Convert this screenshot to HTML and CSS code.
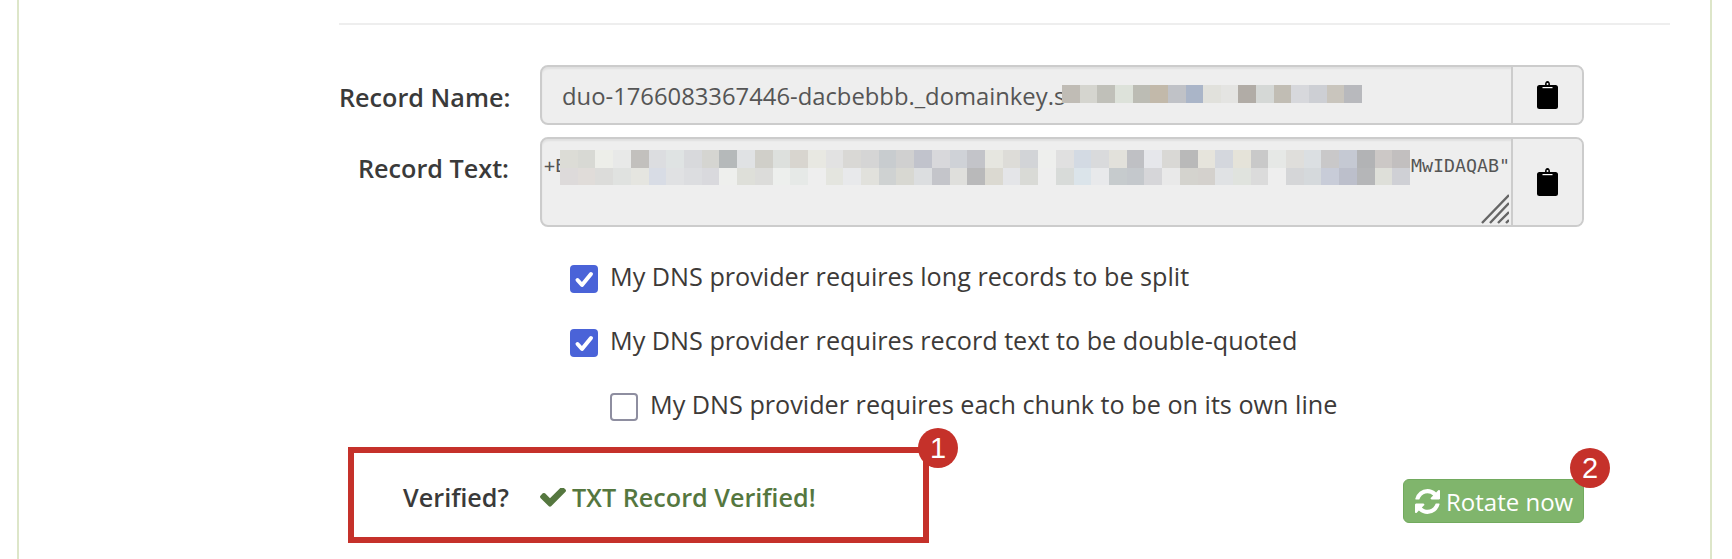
FILE: index.html
```html
<!DOCTYPE html>
<html lang="en">

<head>
    <meta charset="UTF-8" />
    <title>DKIM record</title>
    <link rel="stylesheet" href="styles.css">
</head>

<body>
    <div class="panel">
        <div class="content">
            <div class="divider"></div>

            <div class="form-row row-name">
                <div class="form-label">Record Name:</div>
                <div class="field field-name">
                    <div class="field-text">duo-1766083367446-dacbebbb._domainkey.s</div>
                    <!-- pixelated part of the record name -->
                    <svg class="mosaic mosaic-name" viewBox="0 0 17 1" preserveAspectRatio="none" shape-rendering="crispEdges">
                        <rect x="0" width="1" height="1" fill="#c0bcb5"/><rect x="1" width="1" height="1" fill="#d5d5cf"/><rect x="2" width="1" height="1" fill="#c0c0b9"/><rect x="3" width="1" height="1" fill="#dde2da"/><rect x="4" width="1" height="1" fill="#bcbcb4"/><rect x="5" width="1" height="1" fill="#c2b9aa"/><rect x="6" width="1" height="1" fill="#c0c2c7"/><rect x="7" width="1" height="1" fill="#aab5c8"/><rect x="8" width="1" height="1" fill="#e1e1dc"/><rect x="9" width="1" height="1" fill="#e4e4e2"/><rect x="10" width="1" height="1" fill="#b1aca6"/><rect x="11" width="1" height="1" fill="#d5d8d6"/><rect x="12" width="1" height="1" fill="#c1bdb4"/><rect x="13" width="1" height="1" fill="#d7d8dc"/><rect x="14" width="1" height="1" fill="#cdcfd4"/><rect x="15" width="1" height="1" fill="#c9c5bd"/><rect x="16" width="1" height="1" fill="#b8b9bd"/>
                    </svg>
                    <div class="copy-btn">
                        <svg class="clip-icon" viewBox="0 0 21 28"><path d="M8 4C8 1.5 9 0 10.500 0S13 1.500 13 4H18.500A2.500 2.500 0 0 1 21 6.500V25.500A2.500 2.500 0 0 1 18.500 28H2.500A2.500 2.500 0 0 1 0 25.500V6.500A2.500 2.500 0 0 1 2.500 4Z" fill="#000"/><rect x="5.500" y="6" width="10" height="1.200" fill="#fff"/><circle cx="10.500" cy="3" r="1" fill="#fff"/></svg>
                    </div>
                </div>
            </div>

            <div class="form-row row-text">
                <div class="form-label">Record Text:</div>
                <div class="field field-long">
                    <div class="field-mono"><span>+E</span><span>MwIDAQAB"</span></div>
                    <!-- pixelated part of the key -->
                    <svg class="mosaic mosaic-text" viewBox="0 0 48 2" preserveAspectRatio="none" shape-rendering="crispEdges">
                        <g>
                            <rect x="0" width="1" height="1" fill="#dcdcd6"/><rect x="1" width="1" height="1" fill="#d8d9d4"/><rect x="2" width="1" height="1" fill="#edeee9"/><rect x="3" width="1" height="1" fill="#e8e9e8"/><rect x="4" width="1" height="1" fill="#c2c0bd"/><rect x="5" width="1" height="1" fill="#dcdde0"/><rect x="6" width="1" height="1" fill="#dfe3e3"/><rect x="7" width="1" height="1" fill="#d8d9dc"/><rect x="8" width="1" height="1" fill="#d5d5d1"/><rect x="9" width="1" height="1" fill="#b5b9ba"/><rect x="10" width="1" height="1" fill="#e0e2e4"/><rect x="11" width="1" height="1" fill="#d0cfc9"/><rect x="12" width="1" height="1" fill="#dde0dd"/><rect x="13" width="1" height="1" fill="#d8d5cf"/><rect x="14" width="1" height="1" fill="#e8e8e2"/><rect x="15" width="1" height="1" fill="#e2e2e2"/><rect x="16" width="1" height="1" fill="#d9d8d5"/><rect x="17" width="1" height="1" fill="#d5d5d5"/><rect x="18" width="1" height="1" fill="#c8cccf"/><rect x="19" width="1" height="1" fill="#d0d0d0"/><rect x="20" width="1" height="1" fill="#c1c3cc"/><rect x="21" width="1" height="1" fill="#d8d8db"/><rect x="22" width="1" height="1" fill="#cfd2d7"/><rect x="23" width="1" height="1" fill="#c3c4c9"/><rect x="24" width="1" height="1" fill="#e6e6e0"/>
                            <rect x="25" width="1" height="1" fill="#dddcd8"/><rect x="26" width="1" height="1" fill="#d2d4d7"/><rect x="27" width="1" height="1" fill="#eeefed"/><rect x="28" width="1" height="1" fill="#e0e0e0"/><rect x="29" width="1" height="1" fill="#d3dae3"/><rect x="30" width="1" height="1" fill="#d9dadc"/><rect x="31" width="1" height="1" fill="#e2e1db"/><rect x="32" width="1" height="1" fill="#bfc0c4"/><rect x="33" width="1" height="1" fill="#e6e7eb"/><rect x="34" width="1" height="1" fill="#d9d8d5"/><rect x="35" width="1" height="1" fill="#b9b9b9"/><rect x="36" width="1" height="1" fill="#e6e4dc"/><rect x="37" width="1" height="1" fill="#d4d7dd"/><rect x="38" width="1" height="1" fill="#e5e3d9"/><rect x="39" width="1" height="1" fill="#c9c9c9"/><rect x="40" width="1" height="1" fill="#e6e8e6"/><rect x="41" width="1" height="1" fill="#dfdedb"/><rect x="42" width="1" height="1" fill="#dbdfe2"/><rect x="43" width="1" height="1" fill="#c9c8c9"/><rect x="44" width="1" height="1" fill="#c5c9d3"/><rect x="45" width="1" height="1" fill="#b2b3b5"/><rect x="46" width="1" height="1" fill="#ccc8c6"/><rect x="47" width="1" height="1" fill="#c2bfbf"/>
                        </g>
                        <g>
                            <rect x="0" y="1" width="1" height="1" fill="#dddada"/><rect x="1" y="1" width="1" height="1" fill="#e0dcd9"/><rect x="2" y="1" width="1" height="1" fill="#dcdcda"/><rect x="3" y="1" width="1" height="1" fill="#e0e2e0"/><rect x="4" y="1" width="1" height="1" fill="#e5e5e0"/><rect x="5" y="1" width="1" height="1" fill="#d8dce5"/><rect x="6" y="1" width="1" height="1" fill="#e0e1e3"/><rect x="7" y="1" width="1" height="1" fill="#dcdde0"/><rect x="8" y="1" width="1" height="1" fill="#d9d9dd"/><rect x="9" y="1" width="1" height="1" fill="#eeefed"/><rect x="10" y="1" width="1" height="1" fill="#dedfd9"/><rect x="11" y="1" width="1" height="1" fill="#dcdcda"/><rect x="12" y="1" width="1" height="1" fill="#edefed"/><rect x="13" y="1" width="1" height="1" fill="#e6e9e7"/><rect x="14" y="1" width="1" height="1" fill="#eeeeee"/><rect x="15" y="1" width="1" height="1" fill="#e4e5df"/><rect x="16" y="1" width="1" height="1" fill="#e8e9eb"/><rect x="17" y="1" width="1" height="1" fill="#e1e1dc"/><rect x="18" y="1" width="1" height="1" fill="#cfd2d2"/><rect x="19" y="1" width="1" height="1" fill="#d8d8d2"/><rect x="20" y="1" width="1" height="1" fill="#dcdee0"/><rect x="21" y="1" width="1" height="1" fill="#c4c5ca"/><rect x="22" y="1" width="1" height="1" fill="#dfdfdc"/><rect x="23" y="1" width="1" height="1" fill="#b9b9ba"/><rect x="24" y="1" width="1" height="1" fill="#dbd9d1"/>
                            <rect x="25" y="1" width="1" height="1" fill="#e4e5e8"/><rect x="26" y="1" width="1" height="1" fill="#d9dad6"/><rect x="27" y="1" width="1" height="1" fill="#eeeeee"/><rect x="28" y="1" width="1" height="1" fill="#d8dbd9"/><rect x="29" y="1" width="1" height="1" fill="#dbe4ea"/><rect x="30" y="1" width="1" height="1" fill="#e8e9eb"/><rect x="31" y="1" width="1" height="1" fill="#c6cbcd"/><rect x="32" y="1" width="1" height="1" fill="#c4c8cc"/><rect x="33" y="1" width="1" height="1" fill="#d6d6d9"/><rect x="34" y="1" width="1" height="1" fill="#e9e9e9"/><rect x="35" y="1" width="1" height="1" fill="#d4d3ce"/><rect x="36" y="1" width="1" height="1" fill="#d4d1cd"/><rect x="37" y="1" width="1" height="1" fill="#e0e2e4"/><rect x="38" y="1" width="1" height="1" fill="#e0e3de"/><rect x="39" y="1" width="1" height="1" fill="#dbdbdb"/><rect x="40" y="1" width="1" height="1" fill="#eeeeee"/><rect x="41" y="1" width="1" height="1" fill="#d5d6d8"/><rect x="42" y="1" width="1" height="1" fill="#d5d9dc"/><rect x="43" y="1" width="1" height="1" fill="#c8ccd8"/><rect x="44" y="1" width="1" height="1" fill="#bcbfcb"/><rect x="45" y="1" width="1" height="1" fill="#b5b6b8"/><rect x="46" y="1" width="1" height="1" fill="#dedfd9"/><rect x="47" y="1" width="1" height="1" fill="#cfd0d5"/>
                        </g>
                    </svg>
                    <!-- textarea resize handle -->
                    <svg class="grip" viewBox="0 0 28 30"><path d="M1 29L28 1M9 29L28 9M17 29L28 18M25 29L28 26" stroke="#666" stroke-width="2.400" fill="none"/></svg>
                    <div class="copy-btn">
                        <svg class="clip-icon" viewBox="0 0 21 28"><path d="M8 4C8 1.5 9 0 10.500 0S13 1.500 13 4H18.500A2.500 2.500 0 0 1 21 6.500V25.500A2.500 2.500 0 0 1 18.500 28H2.500A2.500 2.500 0 0 1 0 25.500V6.500A2.500 2.500 0 0 1 2.500 4Z" fill="#000"/><rect x="5.500" y="6" width="10" height="1.200" fill="#fff"/><circle cx="10.500" cy="3" r="1" fill="#fff"/></svg>
                    </div>
                </div>
            </div>

            <div class="options">
                <label class="option">
                    <span class="check checked"><svg viewBox="0 0 28 28"><path d="M7.500 15L12 20L21 9" stroke="#fff" stroke-width="4" stroke-linecap="round" stroke-linejoin="round" fill="none"/></svg></span>
                    My DNS provider requires long records to be split
                </label>
                <label class="option">
                    <span class="check checked"><svg viewBox="0 0 28 28"><path d="M7.500 15L12 20L21 9" stroke="#fff" stroke-width="4" stroke-linecap="round" stroke-linejoin="round" fill="none"/></svg></span>
                    My DNS provider requires record text to be double-quoted
                </label>
                <label class="option option-sub">
                    <span class="check"></span>
                    My DNS provider requires each chunk to be on its own line
                </label>
            </div>

            <div class="status-row">
                <div class="callout">
                    <div class="form-label">Verified?</div>
                    <div class="verified">
                        <svg class="ok-icon" viewBox="121 420 1550 1100"><path d="M1671 566q0 40-28 68l-724 724-136 136q-28 28-68 28t-68-28l-136-136-362-362q-28-28-28-68t28-68l136-136q28-28 68-28t68 28l294 295 656-657q28-28 68-28t68 28l136 136q28 28 28 68z" fill="#55773f"/></svg>
                        TXT Record Verified!
                    </div>
                    <span class="marker marker-one">1</span>
                </div>
                <button class="rotate-btn">
                    <svg class="rotate-icon" viewBox="128 128 1536 1536"><path d="M1639 1056q0 5-1 7-64 268-268 434.500t-478 166.500q-146 0-282.500-55t-243.500-157l-129 129q-19 19-45 19t-45-19-19-45v-448q0-26 19-45t45-19h448q26 0 45 19t19 45-19 45l-137 137q71 66 161 102t187 36q134 0 250-65t186-179q11-17 53-117 8-23 30-23h192q13 0 22.500 9.500t9.500 22.500zm25-800v448q0 26-19 45t-45 19h-448q-26 0-45-19t-19-45 19-45l138-138q-148-137-349-137-134 0-250 65t-186 179q-11 17-53 117-8 23-30 23h-199q-13 0-22.500-9.500t-9.500-22.500v-7q65-268 270-434.500t480-166.500q146 0 284 55.500t245 156.500l130-129q19-19 45-19t45 19 19 45z" fill="#fff"/></svg>
                    Rotate now
                    <span class="marker marker-two">2</span>
                </button>
            </div>
        </div>
    </div>
</body>

</html>
```

FILE: styles.css
```css
html,
body {
    margin: 0;
    height: 559px;
    overflow: hidden;
    background-color: white;
    font-family: "Open Sans", "Noto Sans", sans-serif;
    color: #3d3a38;
}

.panel {
    margin-left: 17px;
    width: 1695px;
    height: 559px;
    box-sizing: border-box;
    border-left: 2px solid #dde6c9;
    border-right: 2px solid #dde6c9;
}

.content {
    margin-left: 320px;
    width: 1331px;
    padding-top: 23px;
}

.divider {
    height: 2px;
    background-color: #eeeeee;
}

.form-row {
    display: flex;
    gap: 31px;
}

.row-name {
    margin-top: 40px;
    align-items: center;
}

.row-text {
    margin-top: 12px;
}

.form-label {
    width: 170px;
    flex-shrink: 0;
    text-align: right;
    font-size: 25.200px;
    font-weight: 600;
    color: #3a3a3a;
    white-space: nowrap;
}

.row-name .form-label {
    padding-top: 4px;
}

.row-text .form-label {
    padding-top: 14px;
}

.field {
    position: relative;
    display: flex;
    width: 1044px;
    box-sizing: border-box;
    border: 2px solid #cccccc;
    border-radius: 8px;
    background-color: #eeeeee;
    box-shadow: inset 0 2px 2px rgba(0, 0, 0, 0.06);
    overflow: hidden;
}

.field-name {
    height: 60px;
}

.field-long {
    height: 90px;
}

.field-text {
    flex: 1;
    padding-left: 20px;
    line-height: 58px;
    font-size: 23.800px;
    color: #555555;
    white-space: nowrap;
    overflow: hidden;
}

.field-mono {
    flex: 1;
    display: flex;
    justify-content: space-between;
    padding: 9px 1px 0 2px;
    font-family: "DejaVu Sans Mono", monospace;
    font-size: 18.300px;
    line-height: 36px;
    color: #555555;
}

.copy-btn {
    width: 71px;
    flex-shrink: 0;
    display: flex;
    justify-content: center;
    align-items: center;
    border-left: 2px solid #cccccc;
    box-sizing: border-box;
    background-color: #eeeeee;
}

.clip-icon {
    width: 21px;
    height: 28px;
}

.mosaic {
    position: absolute;
}

.mosaic-name {
    left: 520px;
    top: 18px;
    width: 300px;
    height: 18px;
}

.mosaic-text {
    left: 18px;
    top: 11px;
    width: 850px;
    height: 35px;
}

.grip {
    position: absolute;
    right: 73px;
    bottom: 1px;
    width: 28px;
    height: 30px;
}

.options {
    margin-left: 231px;
    padding-top: 38px;
    display: flex;
    flex-direction: column;
    gap: 36px;
}

.option {
    display: flex;
    align-items: flex-start;
    gap: 12px;
    height: 28px;
    font-size: 25.200px;
    line-height: 22px;
}

.option-sub {
    margin-left: 40px;
}

.check {
    width: 28px;
    height: 28px;
    flex-shrink: 0;
    box-sizing: border-box;
    border: 2px solid #8e8ea0;
    border-radius: 4px;
    background-color: white;
}

.check.checked {
    border: 0;
    background-color: #4a63d8;
}

.check svg {
    display: block;
    width: 28px;
    height: 28px;
}

.status-row {
    margin-top: 26px;
    margin-left: 9px;
    display: flex;
    justify-content: space-between;
    align-items: flex-start;
    width: 1236px;
}

.callout {
    position: relative;
    display: flex;
    align-items: center;
    gap: 31px;
    width: 581px;
    height: 96px;
    box-sizing: border-box;
    border: 6px solid #c5312a;
}

.callout .form-label {
    width: 155px;
    padding-top: 4px;
}

.verified {
    display: flex;
    align-items: center;
    gap: 6px;
    padding-top: 4px;
    font-size: 25.200px;
    font-weight: 600;
    color: #55773f;
}

.ok-icon {
    width: 26px;
    height: 19px;
}

.rotate-btn {
    position: relative;
    display: flex;
    align-items: center;
    gap: 6px;
    margin-top: 32px;
    width: 181px;
    height: 44px;
    padding: 0 0 0 11px;
    box-sizing: border-box;
    border: 1px solid #72aa5e;
    border-radius: 6px;
    background-color: #80b56c;
    color: white;
    font-family: inherit;
    font-size: 24px;
}

.rotate-icon {
    width: 25px;
    height: 25px;
}

.marker {
    position: absolute;
    width: 40px;
    height: 40px;
    border-radius: 50%;
    background-color: #c5312a;
    color: white;
    font-family: "Liberation Sans", sans-serif;
    font-size: 29px;
    line-height: 40px;
    text-align: center;
}

.marker-one {
    top: -25px;
    right: -35px;
}

.marker-two {
    top: -32px;
    right: -27px;
}
```
